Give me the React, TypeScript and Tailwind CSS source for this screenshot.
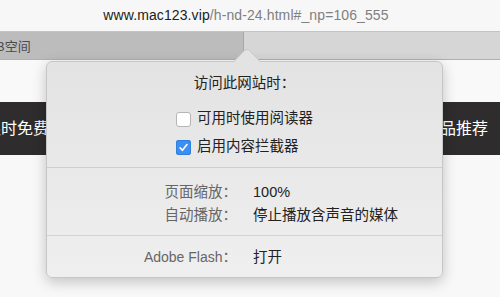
import React from "react";

const font = { fontFamily: '"Liberation Sans", "Noto Sans CJK SC", sans-serif' };

function Check({ checked }: { checked?: boolean }) {
  if (checked) {
    return (
      <span className="flex h-[15px] w-[15px] items-center justify-center rounded-[3px] bg-[#3d8ef2] shadow-[inset_0_0_0_1px_#2f7fe0]">
        <svg width="11" height="11" viewBox="0 0 11 11">
          <path d="M2 5.8 L4.4 8.3 L9 2.6" fill="none" stroke="white" strokeWidth="1.6" strokeLinecap="round" strokeLinejoin="round" />
        </svg>
      </span>
    );
  }
  return <span className="block h-[15px] w-[15px] rounded-[3px] border border-[#b5b5b5] bg-white" />;
}

export default function App() {
  return (
    <div className="relative h-[297px] w-[500px] overflow-hidden bg-[#fafafa]" style={font}>
      {/* URL bar */}
      <div className="flex h-[32px] items-center justify-center border-b border-[#c4c4c4] bg-[#f7f7f7] pr-[8px] text-[14px] tracking-[0.1px]">
        <span className="text-[#222]">www.mac123.vip</span>
        <span className="text-[#808080]">/h-nd-24.html#_np=106_555</span>
      </div>
      {/* Tab bar */}
      <div className="flex h-[28px] border-b border-[#b0b0b0]">
        <div className="flex w-[244px] items-center overflow-hidden border-r border-[#a8a8a8] bg-[#bcbcbc] pt-[2px] text-[13px] text-[#4a4a4a]">
          <span className="-ml-[4px]">B空间</span>
        </div>
        <div className="flex-1 bg-[#d6d6d6]" />
      </div>
      {/* Page */}
      <div className="flex flex-col bg-white">
        <div className="h-[42px] bg-[#f9f9f9]" />
        <div className="flex h-[53px] items-center justify-between overflow-hidden bg-[#2e2c2d] text-[16px] text-white">
          <span className="-ml-[15px] whitespace-nowrap">限时免费</span>
          <span className="mr-[12px] whitespace-nowrap">产品推荐</span>
        </div>
        <div className="h-[150px] bg-[#f8f8f8]" />
      </div>

      {/* Popover */}
      <div className="absolute left-[46px] top-[61px] h-[217px] w-[397px] rounded-[6px] border border-[#c6c6c6] bg-gradient-to-b from-[#e3e3e3] to-[#efefef] shadow-[0_4px_14px_rgba(0,0,0,0.22)]">
        <svg className="absolute left-[186px] -top-[13px]" width="28" height="14" viewBox="0 0 28 14">
          <path d="M0 13.5 L11.5 1.5 Q14 -0.5 16.5 1.5 L28 13.5" fill="#e3e3e3" stroke="#c6c6c6" strokeWidth="1" />
          <rect x="0" y="13" width="28" height="2" fill="#e3e3e3" />
        </svg>
        <div className="flex h-full flex-col text-[14.5px]">
          <div className="pt-[11px] text-center leading-[20px] text-[#222]">访问此网站时：</div>
          <div className="mt-[16px] flex flex-col gap-[8px] pl-[129px] text-[#222]">
            <div className="flex h-[20px] items-center gap-[6px]">
              <Check />
              <span>可用时使用阅读器</span>
            </div>
            <div className="flex h-[20px] items-center gap-[6px]">
              <Check checked />
              <span>启用内容拦截器</span>
            </div>
          </div>
          <div className="mt-[10px] h-px bg-[#cfcfcf]" />
          <div className="grid grid-cols-[190px_1fr] gap-x-[16px] gap-y-[2px] pt-[14px] leading-[21px]">
            <span className="text-right text-[#666]">页面缩放：</span>
            <span className="text-[#222]">100%</span>
            <span className="text-right text-[#666]">自动播放：</span>
            <span className="text-[#222]">停止播放含声音的媒体</span>
          </div>
          <div className="mt-[9px] h-px bg-[#d3d3d3]" />
          <div className="grid grid-cols-[190px_1fr] gap-x-[16px] pt-[11px] leading-[21px]">
            <span className="text-right text-[#666]">
              <span className="text-[14px]">Adobe Flash</span>：
            </span>
            <span className="text-[#222]">打开</span>
          </div>
        </div>
      </div>
    </div>
  );
}
